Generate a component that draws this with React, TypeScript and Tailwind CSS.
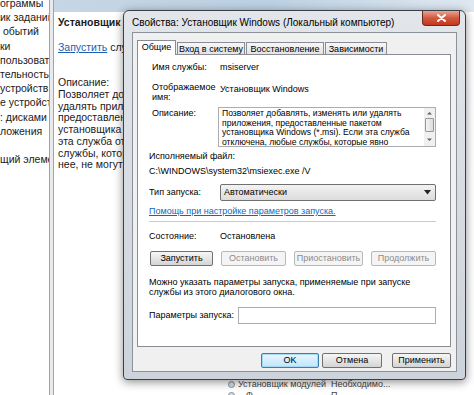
import React from 'react';

const leftItems = [
  'ограммы',
  'ик заданий',
  ' обытий',
  'ки',
  'пользовате',
  'тельность',
  'устройств',
  'е устройст',
  ': дисками',
  'ложения',
  '',
  'щий элемен',
];

const descLines = [
  'Позволяет добавлять, изменять или',
  'удалять приложения,',
  'предоставленные пакетом',
  'установщика Windows (*.msi). Если',
  'эта служба отключена, любые',
  'службы, которые явно зависят от',
  'нее, не могут быть запущены.',
];

function WinButton({ children, disabled, primary, className = '' }: { children: React.ReactNode; disabled?: boolean; primary?: boolean; className?: string }) {
  const tone = disabled
    ? 'border-[#b5b9bd] bg-[#f4f4f4] text-[#8d8d8d]'
    : primary
      ? 'border-[#3c7fb1] bg-gradient-to-b from-[#eaf6fd] to-[#bee6fd] text-black shadow-[inset_0_0_0_1px_#a7d9f5]'
      : 'border-[#707070] bg-gradient-to-b from-[#f6f6f6] via-[#e5e5e5] to-[#d4d4d4] text-black';
  return (
    <div className={`flex h-[15px] items-center justify-center rounded-[2px] border text-[9px] leading-none ${tone} ${className}`}>
      {children}
    </div>
  );
}

function Tab({ label, active, w }: { label: string; active?: boolean; w: string }) {
  return (
    <div
      className={`flex items-center justify-center border border-[#898c95] text-[9px] leading-none ${w} ${
        active ? 'relative z-10 h-[15px] border-b-0 bg-white pb-[1px]' : 'h-[13px] bg-gradient-to-b from-[#f7f7f7] to-[#e3e3e3] pt-[1px]'
      }`}
    >
      {label}
    </div>
  );
}

export default function App() {
  return (
    <div className="relative h-[395px] w-[474px] overflow-hidden bg-white font-['Liberation_Sans',Arial,sans-serif] text-[#1a1a1a]">
      <div className="flex h-full">
        {/* left nav */}
        <div className="w-[49px] shrink-0 overflow-hidden bg-white">
          <div className="mt-[-4px] flex flex-col text-[10.5px] leading-[14.2px]">
            {leftItems.map((t, i) => (
              <div key={i} className="h-[14.2px] whitespace-pre">
                {t}
              </div>
            ))}
          </div>
        </div>
        <div className="flex w-[5px] shrink-0">
          <div className="w-[1px] bg-[#a0a4a8]" />
          <div className="w-[3px] bg-[#e8eaec]" />
          <div className="w-[1px] bg-[#a0a4a8]" />
        </div>

        {/* services area */}
        <div className="flex min-w-0 flex-1 flex-col">
          <div className="h-[12px] shrink-0 bg-gradient-to-r from-[#c7d6e4] via-[#bcd0e2] to-[#dfe8f0]" />
          <div className="flex min-h-0 flex-1">
            <div className="w-[174px] shrink-0 overflow-hidden pl-[4px] text-[10.5px]">
              <div className="mt-[4px] whitespace-nowrap font-bold leading-[13px]">Установщик Windows</div>
              <div className="mt-[12px] whitespace-nowrap leading-[13px]">
                <span className="text-[#1b5fb5] underline">Запустить</span> службу
              </div>
              <div className="mt-[22px] leading-[13px]">Описание:</div>
              <div className="flex flex-col leading-[11.7px]">
                {descLines.map((l) => (
                  <div key={l} className="whitespace-nowrap">
                    {l}
                  </div>
                ))}
              </div>
            </div>
            <div className="flex min-w-0 flex-1 flex-col justify-end pb-[-4px] text-[9px] leading-[11px] text-[#444]">
              <div className="flex items-center gap-[3px] whitespace-nowrap">
                <span className="h-[7px] w-[7px] rounded-full border border-[#7a8ea3] bg-[#d4dde6]" />
                <span className="w-[90px]">Установщик модулей</span>
                <span>Необходимо...</span>
              </div>
              <div className="mb-[-6px] flex items-center gap-[3px] whitespace-nowrap">
                <span className="h-[7px] w-[7px] rounded-full border border-[#7a8ea3] bg-[#d4dde6]" />
                <span className="w-[90px] pl-[8px]">Ф</span>
                <span>П</span>
              </div>
            </div>
          </div>
        </div>
      </div>

      {/* properties dialog */}
      <div className="absolute left-[123px] top-[10px] flex h-[370px] w-[343px] flex-col rounded-t-[6px] rounded-b-[4px] border border-[#3b4047] bg-gradient-to-b from-[#e2e6eb] via-[#d6dce2] to-[#cdd3da] shadow-[0_2px_10px_rgba(0,0,0,0.45)]">
        <div className="flex h-[21px] shrink-0 items-start justify-between">
          <div className="whitespace-nowrap pl-[8px] pt-[6px] text-[10px] leading-[12px] text-black">
            Свойства: Установщик Windows (Локальный компьютер)
          </div>
          <div className="mr-[5px] flex h-[15px] w-[38px] items-center justify-center rounded-b-[4px] border border-t-0 border-[#6b2a22] bg-gradient-to-b from-[#e8a391] via-[#d2583f] to-[#c3371f]">
            <svg width="9" height="8" viewBox="0 0 9 8">
              <path d="M1 1 L8 7 M8 1 L1 7" stroke="#fff" strokeWidth="2" strokeLinecap="round" />
            </svg>
          </div>
        </div>

        <div className="mx-[8px] mb-[7px] flex flex-1 flex-col border border-[#8b9299] bg-[#f0f0f0] text-[9px] text-black">
          <div className="flex items-end gap-[1px] pl-[4px] pt-[7px]">
            <Tab label="Общие" active w="w-[39px]" />
            <Tab label="Вход в систему" w="w-[68px]" />
            <Tab label="Восстановление" w="w-[78px]" />
            <Tab label="Зависимости" w="w-[62px]" />
          </div>

          <div className="mx-[4px] -mt-px mr-[5px] flex h-[293px] flex-col border border-[#898c95] bg-white pl-[11px] pr-[14px] pt-[7px] leading-[11px]">
            <div className="flex h-[11px]">
              <div className="w-[71px] pl-[3px]">Имя службы:</div>
              <div>msiserver</div>
            </div>

            <div className="mt-[9px] flex">
              <div className="w-[71px] pl-[3px] leading-[10px]">
                Отображаемое
                <br />
                имя:
              </div>
              <div className="mt-[2px]">Установщик Windows</div>
            </div>

            <div className="mt-[5px] flex">
              <div className="w-[69px] pl-[3px] pt-[1px]">Описание:</div>
              <div className="flex h-[40px] flex-1 border border-[#abadb3] bg-white">
                <div className="flex-1 overflow-hidden pl-[3px] pt-[1px] text-[8.6px] leading-[9.5px]">
                  <div className="whitespace-nowrap">Позволяет добавлять, изменять или удалять</div>
                  <div className="whitespace-nowrap">приложения, предоставленные пакетом</div>
                  <div className="whitespace-nowrap">установщика Windows (*.msi). Если эта служба</div>
                  <div className="whitespace-nowrap">отключена, любые службы, которые явно</div>
                </div>
                <div className="flex w-[11px] flex-col items-center bg-[#f0f0f0]">
                  <svg width="7" height="8" viewBox="0 0 7 8" className="mt-[1px]">
                    <path d="M1 5.5 L3.5 3 L6 5.5 Z" fill="#606060" />
                  </svg>
                  <div className="mt-[1px] h-[14px] w-[9px] rounded-[1px] border border-[#979797] bg-gradient-to-r from-[#f4f4f4] to-[#dcdcdc]" />
                  <div className="flex-1" />
                  <svg width="7" height="8" viewBox="0 0 7 8" className="mb-[2px]">
                    <path d="M1 2.5 L3.5 5 L6 2.5 Z" fill="#606060" />
                  </svg>
                </div>
              </div>
            </div>

            <div className="mt-[4px]">Исполняемый файл:</div>
            <div className="mt-[4px] whitespace-nowrap">C:\WINDOWS\system32\msiexec.exe /V</div>

            <div className="mt-[7px] flex h-[17px] items-center">
              <div className="w-[71px]">Тип запуска:</div>
              <div className="flex h-[17px] flex-1 items-center justify-between rounded-[2px] border border-[#707070] bg-gradient-to-b from-[#f3f3f3] to-[#dcdcdc] pl-[3px] pr-[4px]">
                <span>Автоматически</span>
                <svg width="7" height="5" viewBox="0 0 7 5">
                  <path d="M0 0 L7 0 L3.5 4.5 Z" fill="#222" />
                </svg>
              </div>
            </div>

            <div className="mt-[5px] whitespace-nowrap text-[#1566b8] underline">Помощь при настройке параметров запуска.</div>

            <div className="mt-[4px] h-[1px] bg-[#c9cbcf]" />

            <div className="mt-[9px] flex">
              <div className="w-[71px]">Состояние:</div>
              <div>Остановлена</div>
            </div>

            <div className="ml-[1px] mt-[9px] flex gap-[8px]">
              <WinButton className="w-[63px]">Запустить</WinButton>
              <WinButton disabled className="w-[65px]">Остановить</WinButton>
              <WinButton disabled className="w-[69px]">Приостановить</WinButton>
              <WinButton disabled className="w-[65px]">Продолжить</WinButton>
            </div>

            <div className="mt-[11px] leading-[10px]">
              Можно указать параметры запуска, применяемые при запуске
              <br />
              службы из этого диалогового окна.
            </div>

            <div className="mt-[10px] flex h-[17px] items-center">
              <div className="w-[89px]">Параметры запуска:</div>
              <div className="h-[17px] flex-1 border border-[#abadb3] bg-white" />
            </div>
          </div>

          <div className="mt-[6px] flex justify-end gap-[3px] pr-[5px]">
            <WinButton primary className="w-[58px]">OK</WinButton>
            <WinButton className="mr-[7px] w-[60px]">Отмена</WinButton>
            <WinButton className="w-[59px]">Применить</WinButton>
          </div>
        </div>
      </div>
    </div>
  );
}
